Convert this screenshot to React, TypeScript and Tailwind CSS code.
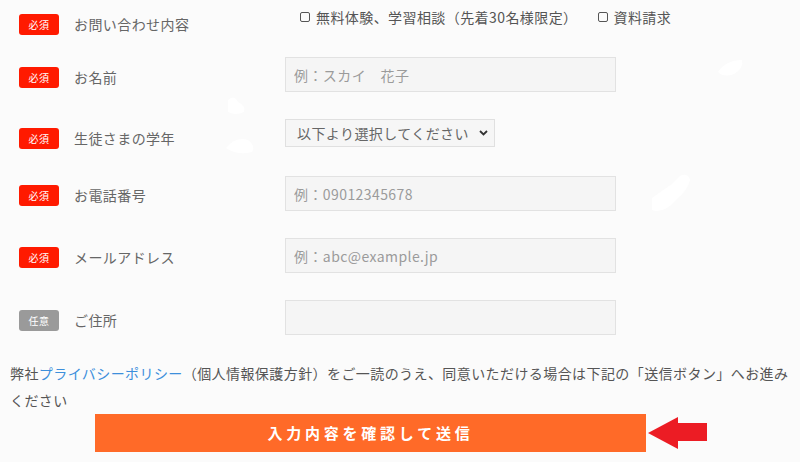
import { ReactNode } from "react";

const Badge = ({ required = true }: { required?: boolean }) => (
  <span
    className={`flex items-center justify-center w-[40px] h-[21px] rounded-[3px] text-[10px] text-white tracking-[0.05em] shrink-0 ${
      required ? "bg-[#ff1a00]" : "bg-[#9a9a9a]"
    }`}
  >
    {required ? "必須" : "任意"}
  </span>
);

interface RowProps {
  label: string;
  required?: boolean;
  children: ReactNode;
  top?: string;
}

const Row = ({ label, required = true, children, top = "mt-[9px]" }: RowProps) => (
  <div className="flex items-start">
    <div className={`flex items-center h-[21px] w-[285px] pl-[19px] shrink-0 ${top}`}>
      <Badge required={required} />
      <span className="ml-[15px] text-[14px] leading-[21px] tracking-[0.03em] text-[#666]">{label}</span>
    </div>
    {children}
  </div>
);

const TextField = ({ placeholder }: { placeholder?: string }) => (
  <input
    placeholder={placeholder}
    className="block w-[331px] h-[35px] px-[8px] bg-[#f5f5f5] border border-[#e2e2e2] text-[14px] tracking-[0.03em] text-[#555] placeholder:text-[#9b9b9b] outline-none"
  />
);

const Check = ({ label }: { label: string }) => (
  <label className="flex items-center gap-[6px] text-[14px] tracking-[0.03em] text-[#555]">
    <span className="w-[10px] h-[10px] border border-[#555] rounded-[2px]" />
    {label}
  </label>
);

const Smudges = () => (
  <svg className="absolute inset-0 pointer-events-none" width="800" height="462">
    <path d="M228 100 q6 -6 10 2 q8 4 6 10 q-8 4 -16 0 z" fill="#fff" />
    <path d="M226 148 q10 -12 22 -8 q8 6 4 12 q-14 4 -26 -4 z" fill="#fff" />
    <path d="M718 72 q8 -12 24 -12 q2 8 -8 14 q-10 4 -16 -2 z" fill="#fff" />
    <path d="M652 198 q14 -10 20 -14 l8 -8 q8 -4 10 4 q-2 10 -14 20 q-12 14 -24 10 z" fill="#fff" />
  </svg>
);

const App = () => {
  return (
    <div className="relative w-[800px] h-[462px] overflow-hidden bg-[#fbfbfb] font-['Noto_Sans_CJK_JP','Noto_Sans',sans-serif]">
      <Smudges />
      <div className="relative flex flex-col pt-[6px]">
        <Row label="お問い合わせ内容" top="mt-[8px]">
          <div className="flex items-center gap-[20px] pl-[15px] h-[22px]">
            <Check label="無料体験、学習相談（先着30名様限定）" />
            <Check label="資料請求" />
          </div>
        </Row>

        <div className="flex flex-col gap-[27px] mt-[22px]">
          <Row label="お名前" top="mt-[10px]">
            <TextField placeholder="例：スカイ　花子" />
          </Row>
          <Row label="生徒さまの学年">
            <div className="relative">
              <select className="block appearance-none w-[210px] h-[28px] pl-[11px] bg-[#f6f6f6] border border-[#e0e0e0] text-[14px] tracking-[0.03em] text-[#666] outline-none">
                <option>以下より選択してください</option>
              </select>
              <svg
                className="absolute right-[7px] top-[11px] pointer-events-none"
                width="9"
                height="6"
                viewBox="0 0 9 6"
              >
                <path d="M1 1 L4.5 4.5 L8 1" stroke="#333" strokeWidth="1.8" fill="none" />
              </svg>
            </div>
          </Row>
          <Row label="お電話番号">
            <TextField placeholder="例：09012345678" />
          </Row>
          <Row label="メールアドレス">
            <TextField placeholder="例：abc@example.jp" />
          </Row>
          <Row label="ご住所" required={false} top="mt-[10px]">
            <TextField />
          </Row>
        </div>

        <p className="mt-[25px] px-[10px] text-[14px] leading-[27px] tracking-[0.03em] text-[#555]">
          弊社<span className="text-[#3d8fdb]">プライバシーポリシー</span>
          （個人情報保護方針）をご一読のうえ、同意いただける場合は下記の「送信ボタン」へお進みください
        </p>

        <div className="flex items-center">
          <button className="ml-[95px] w-[551px] h-[38px] bg-[#ff6a28] text-white text-[15px] font-bold tracking-[0.25em]">
            入力内容を確認して送信
          </button>
          <svg className="ml-[2px]" width="60" height="34" viewBox="0 0 60 34">
            <path d="M0 17 L30 1 L30 7 L59 7 L59 25 L30 25 L30 33 Z" fill="#ec1c24" />
          </svg>
        </div>
      </div>
    </div>
  );
};

export default App;
